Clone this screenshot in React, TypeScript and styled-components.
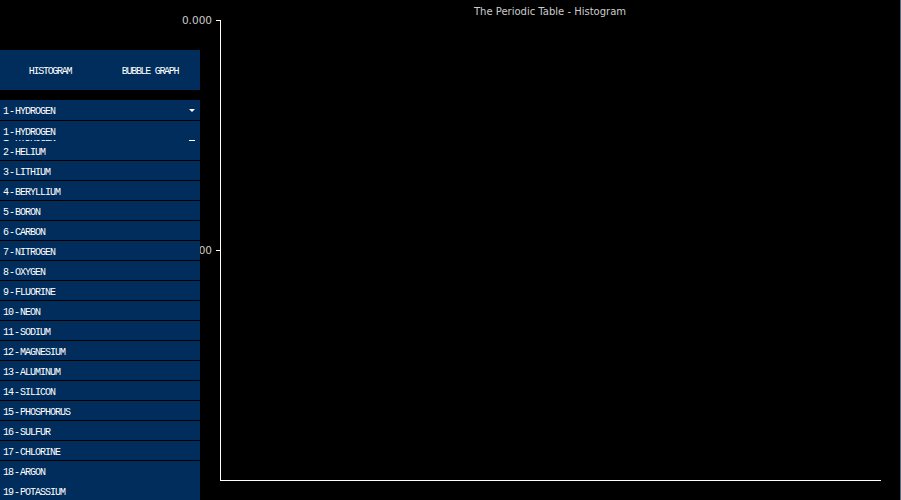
import styled, { createGlobalStyle } from "styled-components";

const elements = [
  "Hydrogen", "Helium", "Lithium", "Beryllium", "Boron", "Carbon", "Nitrogen",
  "Oxygen", "Fluorine", "Neon", "Sodium", "Magnesium", "Aluminum", "Silicon",
  "Phosphorus", "Sulfur", "Chlorine", "Argon", "Potassium",
];

const GlobalStyle = createGlobalStyle`
  html, body {
    margin: 0;
    height: 100%;
    overflow: hidden;
    background: #000;
  }
`;

const Page = styled.div`
  display: flex;
  width: 900px;
  height: 500px;
  overflow: hidden;
  background: #000;
  border-right: 1px solid #5c6f80;
`;

const Sidebar = styled.aside`
  width: 200px;
  flex: none;
  padding-top: 50px;
  position: relative;
  z-index: 1;
  font-family: "Liberation Mono", monospace;
  font-size: 10px;
  line-height: 12px;
  letter-spacing: -1px;
  word-spacing: -4px;
  color: #fff;
  text-transform: uppercase;
`;

const Tabs = styled.div`
  display: flex;
  height: 40px;
  margin-bottom: 10px;
  background: #002d5c;
`;

const Tab = styled.div`
  flex: 1;
  display: flex;
  align-items: center;
  justify-content: center;
  padding-top: 4px;
  letter-spacing: -1.3px;
  word-spacing: 0;
`;

const Select = styled.div`
  display: flex;
  align-items: center;
  justify-content: space-between;
  height: 20px;
  padding: 4px 5px 0 3px;
  margin-bottom: 1px;
  box-sizing: border-box;
  background: #002d5c;
`;

const Caret = styled.span`
  width: 0;
  height: 0;
  margin-top: -4px;
  border-left: 3px solid transparent;
  border-right: 3px solid transparent;
  border-top: 3px solid #fff;
`;

const List = styled.div`
  display: flex;
  flex-direction: column;
`;

const Row = styled.div<{ $joined: boolean }>`
  position: relative;
  display: flex;
  align-items: center;
  box-sizing: border-box;
  height: ${(p) => (p.$joined ? 20 : 19)}px;
  padding: 6px 0 2px 3px;
  margin-bottom: ${(p) => (p.$joined ? 0 : 1)}px;
  background: #002d5c;
`;

// sliver of the hidden select showing through at the bottom of the first row
const Sliver = styled.div`
  position: absolute;
  left: 3px;
  right: 5px;
  bottom: 0;
  height: 1px;
  overflow: hidden;
  display: flex;
  align-items: flex-end;
  justify-content: space-between;
`;

const SliverText = styled.span`
  flex: none;
  line-height: 12px;
  margin-bottom: -4px;
`;

const SliverDash = styled.span`
  flex: none;
  width: 6px;
  height: 1px;
  background: #fff;
`;

const Chart = styled.main`
  flex: 1;
  display: flex;
  flex-direction: column;
  font-family: "DejaVu Sans", sans-serif;
  color: #ccc;
`;

const Title = styled.div`
  height: 20px;
  padding-top: 6px;
  box-sizing: border-box;
  text-align: center;
  font-size: 10px;
  line-height: 12px;
`;

const Plot = styled.div`
  height: 461px;
  margin-left: 20px;
  width: 661px;
  box-sizing: border-box;
  border-left: 1px solid #fff;
  border-bottom: 1px solid #fff;
  position: relative;
`;

const Tick = styled.span<{ $top: number }>`
  position: absolute;
  top: ${(p) => p.$top}px;
  left: -5px;
  width: 5px;
  height: 1px;
  background: #fff;
`;

const TickLabel = styled.span`
  position: absolute;
  right: 9px;
  top: -6px;
  font-size: 10.5px;
  line-height: 13px;
`;

export default function App() {
  return (
    <Page>
      <GlobalStyle />
      <Sidebar>
        <Tabs>
          <Tab>Histogram</Tab>
          <Tab>Bubble Graph</Tab>
        </Tabs>
        <Select>
          1 - Hydrogen
          <Caret />
        </Select>
        <List>
          {elements.map((name, i) => (
            <Row key={name} $joined={i === 0 || i === 17}>
              {`${i + 1} - ${name}`}
              {i === 0 && (
                <Sliver>
                  <SliverText>1 - Hydrogen</SliverText>
                  <SliverDash />
                </Sliver>
              )}
            </Row>
          ))}
        </List>
      </Sidebar>
      <Chart>
        <Title>The Periodic Table - Histogram</Title>
        <Plot>
          <Tick $top={0}>
            <TickLabel>0.000</TickLabel>
          </Tick>
          <Tick $top={230}>
            <TickLabel>0.000</TickLabel>
          </Tick>
        </Plot>
      </Chart>
    </Page>
  );
}
